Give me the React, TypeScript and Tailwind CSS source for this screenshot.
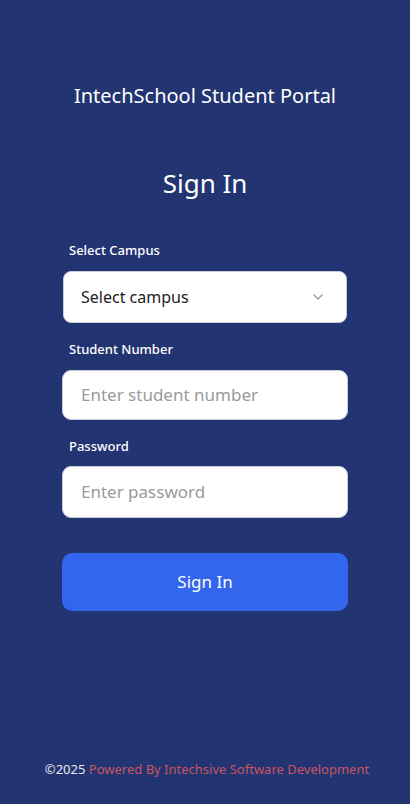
import React from 'react';
import { ChevronDown } from 'lucide-react';

const font = { fontFamily: '"Noto Sans", "Open Sans", sans-serif' };

const App: React.FC = () => {
  return (
    <div style={font} className="h-[804px] w-full bg-[#233472] flex flex-col items-center text-white">
      <h1 className="mt-[82px] text-[20px] leading-[28px] font-normal">IntechSchool Student Portal</h1>
      <h2 className="mt-[55px] text-[26px] leading-[36px] font-normal">Sign In</h2>

      <form className="mt-[40px] w-[286px] flex flex-col" onSubmit={(e) => e.preventDefault()}>
        <label className="ml-[7px] text-[13px] leading-[18px] font-medium">Select Campus</label>
        <div className="mt-[12px] h-[52px] mx-[1px] rounded-[8px] bg-white border border-[#c9ccd6] flex items-center justify-between pl-[17px] pr-[20px]">
          <span className="text-[16px] text-[#222]">Select campus</span>
          <ChevronDown className="w-[16px] h-[16px] text-[#9a9a9a]" strokeWidth={2} />
        </div>

        <label className="mt-[17px] ml-[7px] text-[13px] leading-[18px] font-medium">Student Number</label>
        <div className="mt-[12px] h-[50px] rounded-[9px] bg-white border border-[#c9ccd6] flex items-center pl-[18px]">
          <span className="text-[17px] text-[#9a9a9a]">Enter student number</span>
        </div>

        <label className="mt-[17px] ml-[7px] text-[13px] leading-[18px] font-medium">Password</label>
        <div className="mt-[11px] h-[52px] rounded-[9px] bg-white border border-[#c9ccd6] flex items-center pl-[18px]">
          <span className="text-[17px] text-[#9a9a9a]">Enter password</span>
        </div>

        <button type="submit" className="mt-[35px] h-[58px] rounded-[10px] bg-[#3366ee] text-[17px] text-white">
          Sign In
        </button>
      </form>

      <p className="mt-auto mb-[26px] ml-[4px] text-[13px] leading-[18px]">
        <span className="text-[#e8e8ee]">©2025 </span>
        <span className="text-[#c8555f]">Powered By Intechsive Software Development</span>
      </p>
    </div>
  );
};

export default App;
